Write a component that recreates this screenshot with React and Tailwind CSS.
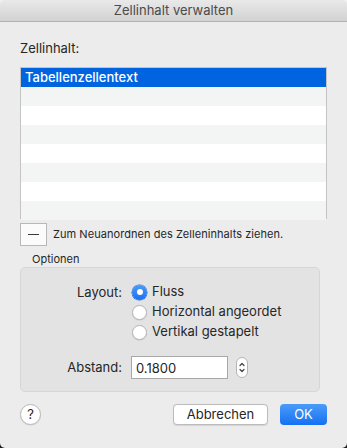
import { useState } from "react";

const rows = ["Tabellenzellentext", "", "", "", "", "", "", ""];

function Radio({ checked, label, onClick }) {
  return (
    <button onClick={onClick} className="flex items-center h-[20px] gap-[5px] text-left">
      {checked ? (
        <span className="w-[15px] h-[15px] rounded-full bg-gradient-to-b from-[#4a9bf7] to-[#1b6ff0] flex items-center justify-center shadow-[0_0_0_0.5px_#1a66d9]">
          <span className="w-[6px] h-[6px] rounded-full bg-white" />
        </span>
      ) : (
        <span className="w-[15px] h-[15px] rounded-full bg-white border border-[#b5b5b5] shadow-[0_0.5px_1px_rgba(0,0,0,0.12)]" />
      )}
      <span className="text-[13px] text-[#262626]">{label}</span>
    </button>
  );
}

function App() {
  const [layout, setLayout] = useState("fluss");
  const [abstand, setAbstand] = useState("0.1800");

  return (
    <div
      className="w-[347px] h-[448px] bg-gradient-to-b from-[#f2f2f2] to-[#1e1e1e]"
      style={{ fontFamily: "Inter, 'Noto Sans', sans-serif" }}
    >
      <div className="w-[347px] h-[448px] bg-[#ececec] rounded-[5px] overflow-hidden flex flex-col">
        <div className="h-[22px] shrink-0 bg-gradient-to-b from-[#e9e9e9] to-[#d2d2d2] border-b border-[#b2b2b2] flex items-center justify-center">
          <span className="text-[13px] text-[#4b4b4b]">Zellinhalt verwalten</span>
        </div>

        <div className="px-[20px]">
          <div className="mt-[18px] text-[13px] text-[#262626] leading-[16px]">Zellinhalt:</div>

          <div className="mt-[11px] w-[307px] h-[152px] border border-[#c4c4c4] bg-white flex flex-col">
            {rows.map((r, i) => (
              <div
                key={i}
                className={
                  i === 0
                    ? "h-[19px] shrink-0 bg-[#0064e1] text-white text-[13px] font-medium pl-[4px] flex items-center"
                    : i % 2 === 1
                    ? "h-[19px] shrink-0 bg-[#f3f5f5]"
                    : "h-[19px] shrink-0 bg-white"
                }
              >
                {r}
              </div>
            ))}
          </div>

          <div className="mt-[4px] flex items-center gap-[6px]">
            <button className="w-[27px] h-[23px] bg-[#fbfbfb] border border-[#b8b8b8] flex items-center justify-center">
              <span className="w-[11px] h-[1px] bg-[#3a3a3a]" />
            </button>
            <span className="text-[11px] text-[#262626] tracking-[0.05px]">Zum Neuanordnen des Zelleninhalts ziehen.</span>
          </div>

          <div className="mt-[6px] ml-[12px] text-[11px] text-[#262626] leading-[14px]">Optionen</div>

          <div className="mt-[1px] w-[300px] h-[125px] bg-[#e3e3e3] border border-[#d6d6d6] rounded-[5px] pt-[14px]">
            <div className="flex">
              <div className="w-[102px] text-right text-[13px] text-[#262626] leading-[20px] pr-[1px]">Layout:</div>
              <div className="ml-[9px] flex flex-col">
                <Radio checked={layout === "fluss"} label="Fluss" onClick={() => setLayout("fluss")} />
                <Radio checked={layout === "horizontal"} label="Horizontal angeordet" onClick={() => setLayout("horizontal")} />
                <Radio checked={layout === "vertikal"} label="Vertikal gestapelt" onClick={() => setLayout("vertikal")} />
              </div>
            </div>

            <div className="mt-[14px] flex items-center">
              <div className="w-[102px] text-right text-[13px] text-[#262626] pr-[1px]">Abstand:</div>
              <input
                value={abstand}
                onChange={(e) => setAbstand(e.target.value)}
                className="ml-[8px] w-[97px] h-[23px] bg-white border border-[#a8a8a8] text-[13px] text-[#262626] px-[4px] outline-none"
              />
              <div className="ml-[8px] w-[12px] h-[21px] bg-white border border-[#b5b5b5] rounded-full flex flex-col items-center justify-center">
                <svg width="8" height="15" viewBox="0 0 8 15" fill="none" stroke="#404040" strokeWidth="1.2" strokeLinecap="round" strokeLinejoin="round">
                  <path d="M2 5.5 L4 3.5 L6 5.5" />
                  <path d="M2 9.5 L4 11.5 L6 9.5" />
                </svg>
              </div>
            </div>
          </div>

          <div className="mt-[12px] flex items-center">
            <button className="w-[21px] h-[21px] rounded-full bg-white border border-[#b8b8b8] text-[13px] text-[#262626] flex items-center justify-center shadow-[0_0.5px_1px_rgba(0,0,0,0.1)]">
              ?
            </button>
            <button className="ml-auto w-[95px] h-[21px] rounded-[4px] bg-white border border-[#bcbcbc] text-[13px] text-[#262626] shadow-[0_0.5px_1px_rgba(0,0,0,0.1)]">
              Abbrechen
            </button>
            <button className="ml-[12px] w-[47px] h-[21px] rounded-[4px] bg-gradient-to-b from-[#4a9bf8] to-[#1370f2] text-[13px] text-white">
              OK
            </button>
          </div>
        </div>
      </div>
    </div>
  );
}

export default App;
